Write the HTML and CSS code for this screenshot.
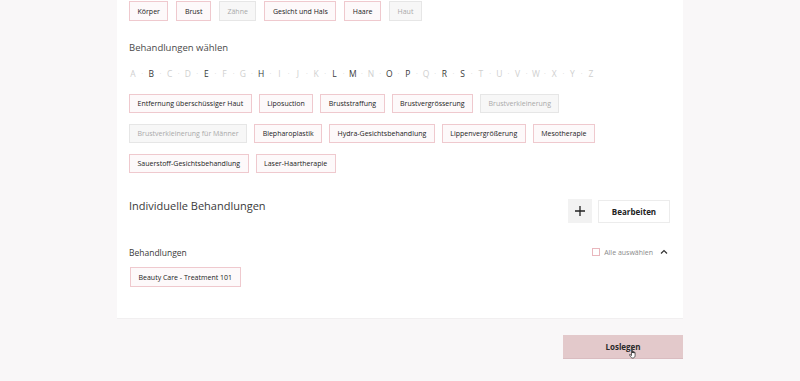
FILE: index.html
```html
<!DOCTYPE html>
<html lang="de">
<head>
    <meta charset="UTF-8">
    <title>Behandlungen</title>
    <link rel="stylesheet" href="styles.css">
</head>
<body>
<div class="page">
    <div class="card">
        <ul class="chips chips-top">
            <li class="chip">Körper</li>
            <li class="chip">Brust</li>
            <li class="chip off">Zähne</li>
            <li class="chip">Gesicht und Hals</li>
            <li class="chip">Haare</li>
            <li class="chip off">Haut</li>
        </ul>

        <h3 class="label">Behandlungen wählen</h3>

        <div class="alpha">
            <span>A</span><i>·</i><span class="on">B</span><i>·</i><span>C</span><i>·</i><span>D</span><i>·</i><span class="on">E</span><i>·</i><span>F</span><i>·</i><span>G</span><i>·</i><span class="on">H</span><i>·</i><span>I</span><i>·</i><span>J</span><i>·</i><span>K</span><i>·</i><span class="on">L</span><i>·</i><span class="on">M</span><i>·</i><span>N</span><i>·</i><span class="on">O</span><i>·</i><span class="on">P</span><i>·</i><span>Q</span><i>·</i><span class="on">R</span><i>·</i><span class="on">S</span><i>·</i><span>T</span><i>·</i><span>U</span><i>·</i><span>V</span><i>·</i><span>W</span><i>·</i><span>X</span><i>·</i><span>Y</span><i>·</i><span>Z</span>
        </div>

        <ul class="chips chips-list">
            <li class="chip">Entfernung überschüssiger Haut</li>
            <li class="chip">Liposuction</li>
            <li class="chip">Bruststraffung</li>
            <li class="chip">Brustvergrösserung</li>
            <li class="chip off">Brustverkleinerung</li>
            <li class="chip off">Brustverkleinerung für Männer</li>
            <li class="chip">Blepharoplastik</li>
            <li class="chip">Hydra-Gesichtsbehandlung</li>
            <li class="chip">Lippenvergrößerung</li>
            <li class="chip">Mesotherapie</li>
            <li class="chip">Sauerstoff-Gesichtsbehandlung</li>
            <li class="chip">Laser-Haartherapie</li>
        </ul>

        <div class="custom-head">
            <h2 class="title">Individuelle Behandlungen</h2>
            <div class="actions">
                <button class="btn-add">
                    <svg width="12" height="12" viewBox="0 0 12 12"><path d="M6 1v10M1 6h10" stroke="#222" stroke-width="1.3"/></svg>
                </button>
                <button class="btn-edit">Bearbeiten</button>
            </div>
        </div>

        <div class="list-head">
            <span class="list-title">Behandlungen</span>
            <label class="select-all"><span class="box"></span>Alle auswählen</label>
            <svg class="caret" width="8" height="6" viewBox="0 0 8 6"><path d="M1 4.5L4 1.5l3 3" fill="none" stroke="#333" stroke-width="1.2"/></svg>
        </div>

        <ul class="chips">
            <li class="chip chip-custom">Beauty Care - Treatment 101</li>
        </ul>
    </div>

    <div class="footer">
        <button class="btn-go">Loslegen
            <!-- mouse pointer from the screenshot -->
            <svg class="cursor" width="9" height="12" viewBox="0 0 9 12">
                <path d="M2.5 1.2c0-.5.9-.5.9 0V6V4.6c0-.5.9-.5.9 0V6V5c0-.5.9-.5.9 0V6.2V5.6c0-.5.9-.5.9 0v2.8c0 1.4-.7 2.6-2.3 2.6H3.4C2.5 11 2 10.3 1.4 9.4L.6 8c-.3-.5.3-.9.7-.5l1.2 1.1z" fill="#fff" stroke="#222" stroke-width=".7" stroke-linejoin="round"/>
            </svg>
        </button>
    </div>
</div>
</body>
</html>
```

FILE: styles.css
```css
*{
    margin: 0;
    padding: 0;
    box-sizing: border-box;
}
body{
    background: #f9f7f8;
    font-family: "Open Sans", "Noto Sans", sans-serif;
    color: #333;
}
.page{
    width: 566px;
    margin: 0 auto;
}
.card{
    background: #fff;
    padding: 1px 13px 31px 12px;
    border-bottom: 1px solid #f1eff0;
}
.chips{
    list-style: none;
    display: flex;
    flex-wrap: wrap;
    column-gap: 7px;
    row-gap: 11px;
}
.chips-top{
    column-gap: 8px;
}
.chip{
    height: 20px;
    padding: 0 7.5px;
    display: flex;
    align-items: center;
    font-size: 7px;
    font-weight: 500;
    color: #222;
    background: #fdf9fa;
    border: 1px solid #efc9ce;
}
.chips-list .chip{
    height: 19px;
}
.chip.off{
    color: #a9a9a9;
    background: #f7f7f7;
    border-color: #e6e6e6;
}
.chip-custom{
    margin-left: 1px;
}
.label{
    margin-top: 20px;
    font-size: 9.5px;
    line-height: 14px;
    font-weight: 400;
    color: #4a4a4a;
}
.alpha{
    margin-top: 12px;
    height: 12px;
    display: flex;
    align-items: center;
    width: 466px;
    justify-content: space-between;
    font-size: 8.5px;
    color: #cfcfcf;
}
.alpha span{
    width: 8px;
    text-align: center;
}
.alpha i{
    font-style: normal;
    font-size: 7px;
    color: #d6d6d6;
}
.alpha .on{
    color: #3a3a3a;
}
.chips-list{
    margin-top: 15px;
}
.custom-head{
    margin-top: 26px;
    display: flex;
    justify-content: space-between;
    align-items: center;
    height: 24px;
}
.title{
    font-size: 11px;
    font-weight: 400;
    color: #3a3a3a;
    margin-top: -12px;
}
.actions{
    display: flex;
    gap: 6px;
    align-items: center;
}
.btn-add{
    width: 24px;
    height: 24px;
    border: none;
    background: #f2f2f2;
    display: flex;
    align-items: center;
    justify-content: center;
}
.btn-edit{
    width: 72px;
    height: 23px;
    border: 1px solid #ececec;
    background: #fff;
    font-family: inherit;
    font-size: 8px;
    font-weight: 700;
    color: #222;
}
.list-head{
    margin-top: 23px;
    height: 12px;
    display: flex;
    align-items: center;
}
.list-title{
    flex: 1;
    font-size: 8.5px;
    color: #3a3a3a;
}
.select-all{
    display: flex;
    align-items: center;
    font-size: 7px;
    color: #8a8a8a;
}
.box{
    width: 8px;
    height: 8px;
    border: 1px solid #e9b7bd;
    margin-right: 4px;
}
.caret{
    margin: 0 2px 0 7px;
}
.list-head + .chips{
    margin-top: 9px;
}
.footer{
    display: flex;
    justify-content: flex-end;
    margin-top: 16px;
}
.btn-go{
    position: relative;
    width: 120px;
    height: 24px;
    border: none;
    border-bottom: 1px solid #d9bcc0;
    background: #e3c9cb;
    font-family: inherit;
    font-size: 8px;
    font-weight: 700;
    color: #2a2a2a;
}
.cursor{
    position: absolute;
    left: 66px;
    top: 12px;
}
```
